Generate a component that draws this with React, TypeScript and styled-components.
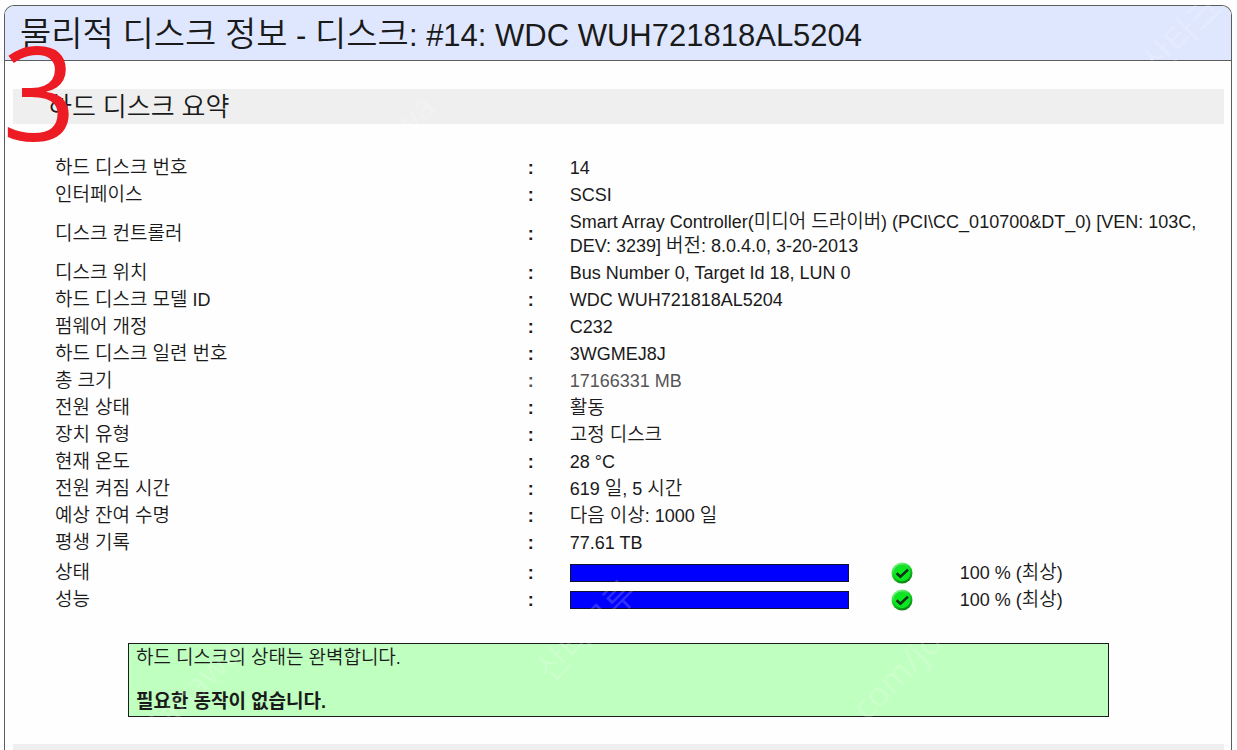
import React from "react";
import styled, { createGlobalStyle } from "styled-components";

const GlobalStyle = createGlobalStyle`
  *, *::before, *::after { box-sizing: border-box; }
  body {
    margin: 0;
    background: #fefefe;
    color: #1a1a1a;
    font-family: "Liberation Sans", "Noto Sans CJK KR", sans-serif;
    font-size: 18px;
  }
`;

const Page = styled.div`
  position: relative;
  height: 100vh;
  padding: 5px 5px 0 4px;
  overflow: hidden;
`;

const Panel = styled.main`
  border: 1px solid #5c5c5c;
  border-bottom: 0;
  border-radius: 10px 10px 0 0;
  min-height: 100%;
  overflow: hidden;
`;

const PanelHeader = styled.header`
  height: 55px;
  padding: 0 15px;
  background: #dfe7ff;
  border-bottom: 1px solid #5c5c5c;
`;

const Title = styled.h1`
  margin: 0;
  font-size: 31px;
  font-weight: 400;
  line-height: 60px;
  white-space: nowrap;
`;

const Hangul = styled.span<{ $size: number; $bold?: boolean }>`
  font-family: "Noto Sans CJK KR", sans-serif;
  font-size: ${(p) => p.$size}px;
  font-weight: ${(p) => (p.$bold ? 700 : 350)};
  line-height: 0;
`;

const Content = styled.div`
  padding: 28px 7px 0 8px;
`;

const SectionTitle = styled.h2`
  height: 35px;
  margin: 0;
  padding-left: 35px;
  background: #efefef;
  font-size: 25px;
  font-weight: 400;
  line-height: 36px;
`;

const SummaryTable = styled.table`
  width: 100%;
  margin-top: 30px;
  border-collapse: collapse;
  table-layout: fixed;
`;

const LabelCol = styled.col`
  width: 42.5%;
`;

const Col = styled.col<{ $width: number }>`
  width: ${(p) => p.$width}px;
`;

const Row = styled.tr<{ $spaced?: boolean; $muted?: boolean }>`
  height: ${(p) => (p.$spaced ? 30 : 27)}px;
  color: ${(p) => (p.$muted ? "#555" : "inherit")};
  && > * {
    padding-top: ${(p) => (p.$spaced ? 3 : 0)}px;
  }
`;

const LabelCell = styled.th`
  padding: 0 0 0 42px;
  color: #1a1a1a;
  font-weight: 400;
  line-height: 24px;
  text-align: left;
`;

const ColonCell = styled.td`
  padding: 0;
  font-weight: 700;
  line-height: 24px;
`;

const ValueCell = styled.td<{ $lines?: number }>`
  height: ${(p) => (p.$lines === 2 ? 51 : 27)}px;
  padding: 0 24px 0 0;
  line-height: 24px;
`;

const MeterCell = styled.td`
  padding: 0;
`;

const Meter = styled.div`
  width: 87%;
  height: 18px;
  border: 1px solid #101030;
  background: #fff;
`;

const MeterFill = styled.div`
  height: 100%;
  background: #00f;
`;

const Icon = styled.svg`
  display: block;
  width: 22px;
  height: 22px;
`;

const Notice = styled.section`
  width: 81%;
  min-height: 74px;
  margin: 30px auto 27px;
  padding: 3px 7px;
  border: 1px solid #1c1c1c;
  background: #bfffbf;
`;

const NoticeText = styled.p<{ $strong?: boolean }>`
  margin: 0 0 22px;
  font-weight: ${(p) => (p.$strong ? 700 : 400)};
  line-height: 22px;
  &:last-child {
    margin-bottom: 0;
  }
`;

const StepMark = styled.span`
  position: absolute;
  top: 26px;
  left: 2px;
  color: #ed1c24;
  font-family: "Open Sans", sans-serif;
  font-size: 130px;
  line-height: 130px;
`;

const Watermark = styled.span<{ $x: number; $y: number }>`
  position: absolute;
  left: ${(p) => p.$x}px;
  top: ${(p) => p.$y}px;
  color: rgba(255, 255, 255, 0.2);
  font-family: "Open Sans", "Noto Sans CJK KR", sans-serif;
  font-size: 34px;
  line-height: 40px;
  white-space: nowrap;
  pointer-events: none;
  transform: translate(-50%, -50%) rotate(-45deg);
`;

function Text({ children, size = 19, bold }: { children: string; size?: number; bold?: boolean }) {
  return (
    <>
      {children.split(/([가-힣]+)/).map((part, i) =>
        i % 2 ? (
          <Hangul key={i} $size={size} $bold={bold}>
            {part}
          </Hangul>
        ) : (
          part
        )
      )}
    </>
  );
}

function OkIcon() {
  return (
    <Icon viewBox="0 0 22 22" role="img" aria-label="정상">
      <defs>
        <linearGradient id="rim" x1="0.2" y1="0" x2="0.7" y2="1">
          <stop offset="0" stopColor="#8dfa9a" />
          <stop offset="0.45" stopColor="#10d820" />
          <stop offset="1" stopColor="#0a7a12" />
        </linearGradient>
        <radialGradient id="face" cx="0.5" cy="0.55" r="0.55">
          <stop offset="0" stopColor="#08f01c" />
          <stop offset="0.75" stopColor="#0ae620" />
          <stop offset="1" stopColor="#2ad63c" />
        </radialGradient>
      </defs>
      <circle cx="11" cy="11" r="10.5" fill="url(#rim)" />
      <circle cx="11" cy="10.8" r="8.4" fill="url(#face)" />
      <path d="M5.6 11.2 9.4 14.8 17 7.6" fill="none" stroke="#10301a" strokeWidth="2.6" />
    </Icon>
  );
}

type Info = { label: string; value: string; lines?: number; muted?: boolean };

const info: Info[] = [
  { label: "하드 디스크 번호", value: "14" },
  { label: "인터페이스", value: "SCSI" },
  {
    label: "디스크 컨트롤러",
    value:
      "Smart Array Controller(미디어 드라이버) (PCI\\CC_010700&DT_0) [VEN: 103C, DEV: 3239] 버전: 8.0.4.0, 3-20-2013",
    lines: 2,
  },
  { label: "디스크 위치", value: "Bus Number 0, Target Id 18, LUN 0" },
  { label: "하드 디스크 모델 ID", value: "WDC WUH721818AL5204" },
  { label: "펌웨어 개정", value: "C232" },
  { label: "하드 디스크 일련 번호", value: "3WGMEJ8J" },
  { label: "총 크기", value: "17166331 MB", muted: true },
  { label: "전원 상태", value: "활동" },
  { label: "장치 유형", value: "고정 디스크" },
  { label: "현재 온도", value: "28 °C" },
  { label: "전원 켜짐 시간", value: "619 일, 5 시간" },
  { label: "예상 잔여 수명", value: "다음 이상: 1000 일" },
  { label: "평생 기록", value: "77.61 TB" },
];

const gauges = [
  { label: "상태", percent: 100, rating: "최상" },
  { label: "성능", percent: 100, rating: "최상" },
];

const watermarks = [
  { text: "산타크루", x: 1192, y: 24 },
  { text: "danawa", x: 384, y: 144 },
  { text: "산타크루", x: 586, y: 630 },
  { text: "danawa", x: 190, y: 690 },
  { text: "com/jo", x: 896, y: 674 },
];

export default function App() {
  return (
    <Page>
      <GlobalStyle />
      <Panel>
        <PanelHeader>
          <Title>
            <Text size={34}>물리적 디스크 정보 - 디스크: #14: WDC WUH721818AL5204</Text>
          </Title>
        </PanelHeader>
        <Content>
          <SectionTitle>
            <Text size={26}>하드 디스크 요약</Text>
          </SectionTitle>
          <SummaryTable>
            <colgroup>
              <LabelCol />
              <Col $width={42} />
              <Col $width={321} />
              <Col $width={69} />
              <col />
            </colgroup>
            <tbody>
              {info.map((item) => (
                <Row key={item.label} $muted={item.muted}>
                  <LabelCell scope="row">
                    <Text>{item.label}</Text>
                  </LabelCell>
                  <ColonCell>:</ColonCell>
                  <ValueCell colSpan={3} $lines={item.lines}>
                    <Text>{item.value}</Text>
                  </ValueCell>
                </Row>
              ))}
              {gauges.map((gauge, i) => (
                <Row key={gauge.label} $spaced={i === 0}>
                  <LabelCell scope="row">
                    <Text>{gauge.label}</Text>
                  </LabelCell>
                  <ColonCell>:</ColonCell>
                  <MeterCell>
                    <Meter>
                      <MeterFill style={{ width: `${gauge.percent}%` }} />
                    </Meter>
                  </MeterCell>
                  <MeterCell>
                    <OkIcon />
                  </MeterCell>
                  <ValueCell>
                    <Text>{`${gauge.percent} % (${gauge.rating})`}</Text>
                  </ValueCell>
                </Row>
              ))}
            </tbody>
          </SummaryTable>
          <Notice>
            <NoticeText>
              <Text>하드 디스크의 상태는 완벽합니다.</Text>
            </NoticeText>
            <NoticeText $strong>
              <Text bold>필요한 동작이 없습니다.</Text>
            </NoticeText>
          </Notice>
          <SectionTitle as="div" />
        </Content>
      </Panel>
      <StepMark>3</StepMark>
      {watermarks.map((mark) => (
        <Watermark key={`${mark.x}-${mark.y}`} $x={mark.x} $y={mark.y} aria-hidden="true">
          {mark.text}
        </Watermark>
      ))}
    </Page>
  );
}
